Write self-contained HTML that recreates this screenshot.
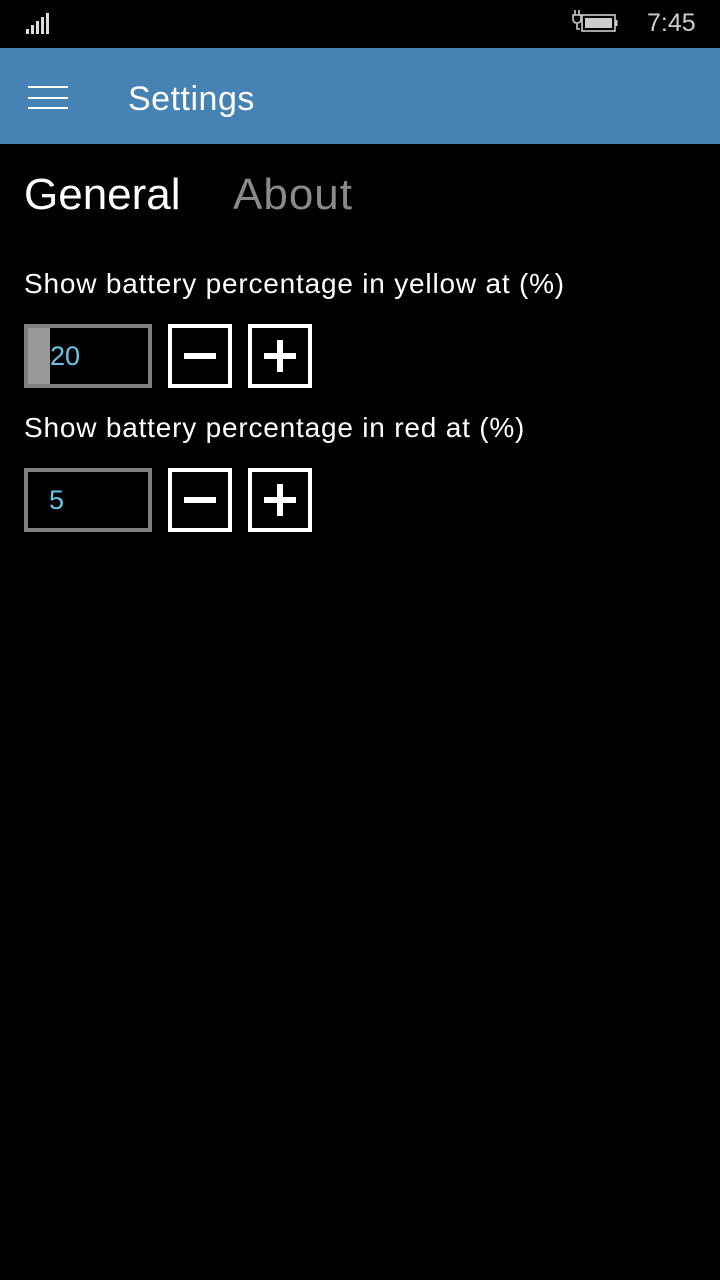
<!DOCTYPE html>
<html><head><meta charset="utf-8"><style>
*{margin:0;padding:0;box-sizing:border-box}
body{width:720px;height:1280px;background:#000;color:#fff;font-family:"Liberation Sans",sans-serif;position:relative;overflow:hidden}
.abs{position:absolute;white-space:nowrap}
.hdr{position:absolute;left:0;top:48px;width:720px;height:96px;background:#4682b4}
.ham{position:absolute;left:28px;width:40px;height:2px;background:#fff}
.box{position:absolute;width:128px;height:64px;border:4px solid #7f7f7f;background:#000}
.btn{position:absolute;width:64px;height:64px;border:4px solid #fff}
.bar{position:absolute;background:#fff}
.val{position:absolute;color:#6cc3ec;font-size:27px;top:13px}
.lbl{font-size:28px;letter-spacing:0.8px}
</style></head><body>
<svg class="abs" style="left:26px;top:12px" width="30" height="24"><rect x="0" y="17" width="3" height="5" fill="#ddd"/><rect x="5" y="13" width="3" height="9" fill="#ddd"/><rect x="10" y="9" width="3" height="13" fill="#ddd"/><rect x="15" y="5" width="3" height="17" fill="#ddd"/><rect x="20" y="1" width="3" height="21" fill="#ddd"/></svg>
<svg class="abs" style="left:570px;top:9px" width="50" height="26"><path d="M5 1v5M9 1v5M3 6h8v4q0 4-4 4t-4-4z M7 14v6h3" stroke="#ccc" stroke-width="1.6" fill="none"/><rect x="12" y="6" width="33" height="16" stroke="#ccc" stroke-width="1.6" fill="none"/><rect x="15" y="9" width="27" height="10" fill="#ccc"/><rect x="45" y="11" width="2.5" height="6" fill="#ccc"/></svg>
<div class="abs" style="left:647px;top:9px;font-size:25px;color:#ccc">7:45</div>
<div class="hdr"></div>
<div class="ham" style="top:86px"></div><div class="ham" style="top:97px"></div><div class="ham" style="top:107px"></div>
<div class="abs" style="left:128px;top:80px;font-size:34px;letter-spacing:0.5px;color:#fff">Settings</div>
<div class="abs" style="left:24px;top:170px;font-size:44px">General</div>
<div class="abs" style="left:233px;top:170px;font-size:44px;letter-spacing:1px;color:#8a8a8a">About</div>
<div class="abs lbl" style="left:24px;top:268px">Show battery percentage in yellow at (%)</div>
<div class="box" style="left:24px;top:324px"><div style="position:absolute;left:0;top:0;width:22px;height:56px;background:#999"></div><div class="val" style="left:22px">20</div></div>
<div class="btn" style="left:168px;top:324px"><div class="bar" style="left:12px;top:25px;width:32px;height:6px"></div></div>
<div class="btn" style="left:248px;top:324px"><div class="bar" style="left:12px;top:25px;width:32px;height:6px"></div><div class="bar" style="left:25px;top:12px;width:6px;height:32px"></div></div>
<div class="abs lbl" style="left:24px;top:412px">Show battery percentage in red at (%)</div>
<div class="box" style="left:24px;top:468px"><div class="val" style="left:21px">5</div></div>
<div class="btn" style="left:168px;top:468px"><div class="bar" style="left:12px;top:25px;width:32px;height:6px"></div></div>
<div class="btn" style="left:248px;top:468px"><div class="bar" style="left:12px;top:25px;width:32px;height:6px"></div><div class="bar" style="left:25px;top:12px;width:6px;height:32px"></div></div>
</body></html>
